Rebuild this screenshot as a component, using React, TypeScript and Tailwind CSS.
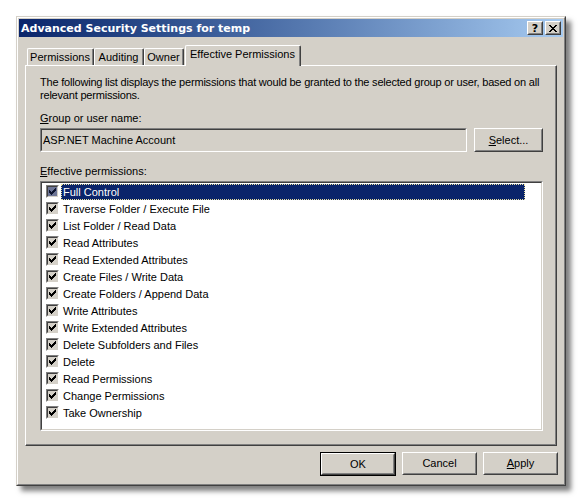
import React from "react";

const FONT = '"Liberation Sans", Arial, sans-serif';

const perms = [
  "Full Control",
  "Traverse Folder / Execute File",
  "List Folder / Read Data",
  "Read Attributes",
  "Read Extended Attributes",
  "Create Files / Write Data",
  "Create Folders / Append Data",
  "Write Attributes",
  "Write Extended Attributes",
  "Delete Subfolders and Files",
  "Delete",
  "Read Permissions",
  "Change Permissions",
  "Take Ownership",
];

function Check({ selected }: { selected: boolean }) {
  const cols: [number, number][] = [
    [1, 2],
    [2, 3],
    [3, 4],
    [4, 3],
    [5, 2],
    [6, 1],
    [7, 0],
  ];
  return (
    <div className="w-[13px] h-[13px] border border-t-[#808080] border-l-[#808080] border-b-white border-r-white shrink-0">
      <div
        className={`w-[11px] h-[11px] border border-t-[#404040] border-l-[#404040] border-b-[#d4d0c8] border-r-[#d4d0c8] ${
          selected ? "bg-[#6d7596]" : "bg-[#d4d0c8]"
        }`}
      >
        <svg width="9" height="9" viewBox="0 0 9 9" shapeRendering="crispEdges" className="block">
          {cols.map(([x, y], i) => (
            <rect key={i} x={x} y={y + 1} width="1" height="3" fill={selected ? "#0e1530" : "#000"} />
          ))}
        </svg>
      </div>
    </div>
  );
}

function Raised({
  children,
  className = "",
}: {
  children: React.ReactNode;
  className?: string;
}) {
  return (
    <div
      className={`border border-t-white border-l-white border-b-[#404040] border-r-[#404040] bg-[#d4d0c8] ${className}`}
    >
      <div className="w-full h-full border border-t-[#d4d0c8] border-l-[#d4d0c8] border-b-[#808080] border-r-[#808080] flex items-center justify-center">
        {children}
      </div>
    </div>
  );
}

function Sunken({
  children,
  className = "",
  inner = "",
}: {
  children: React.ReactNode;
  className?: string;
  inner?: string;
}) {
  return (
    <div
      className={`border border-t-[#808080] border-l-[#808080] border-b-white border-r-white ${className}`}
    >
      <div
        className={`w-full h-full border border-t-[#404040] border-l-[#404040] border-b-[#d4d0c8] border-r-[#d4d0c8] ${inner}`}
      >
        {children}
      </div>
    </div>
  );
}

export default function App() {
  return (
    <div
      className="min-h-[502px] w-[584px] bg-white pt-[16px] pl-[16px] text-[11px] leading-[13px] text-black"
      style={{ fontFamily: FONT }}
    >
      {/* window */}
      <div className="w-[550px] h-[470px] shadow-[5px_5px_5px_rgba(0,0,0,0.5)] border border-t-[#d4d0c8] border-l-[#d4d0c8] border-b-[#404040] border-r-[#404040] bg-[#d4d0c8]">
        <div className="w-full h-full border border-t-white border-l-white border-b-[#808080] border-r-[#808080] p-[1px] flex flex-col">
          {/* title bar */}
          <div className="h-[18px] flex items-center bg-gradient-to-r from-[#0a246a] to-[#a6caf0] pl-[2px] pr-[2px] shrink-0">
            <span
              className="text-white font-bold text-[11px] tracking-[0px] flex-1"
              style={{ fontFamily: '"DejaVu Sans", Verdana, sans-serif' }}
            >
              Advanced Security Settings for temp
            </span>
            <Raised className="w-[16px] h-[14px]">
              <span
                className="font-bold text-[11px] leading-[11px] text-black"
                style={{ fontFamily: '"DejaVu Sans", sans-serif' }}
              >
                ?
              </span>
            </Raised>
            <Raised className="w-[16px] h-[14px] ml-[2px]">
              <svg width="8" height="7" viewBox="0 0 8 7" shapeRendering="crispEdges">
                <path d="M0 0h2v1h-2zM6 0h2v1h-2zM1 1h2v1h-2zM5 1h2v1h-2zM2 2h4v1h-4zM3 3h2v1h-2zM2 4h4v1h-4zM1 5h2v1h-2zM5 5h2v1h-2zM0 6h2v1h-2zM6 6h2v1h-2z" fill="#000" />
              </svg>
            </Raised>
          </div>

          {/* tabs */}
          <div className="mt-[8px] h-[20px] flex items-end pl-[8px] shrink-0">
            {[
              ["Permissions", "w-[67px]"],
              ["Auditing", "w-[50px]"],
              ["Owner", "w-[40px]"],
            ].map(([t, w]) => (
              <div
                key={t}
                className={`${w} h-[17px] border-t border-l border-t-white border-l-white border-r border-r-[#404040] rounded-tl-[2px] rounded-tr-[2px]`}
              >
                <div className="h-full border-r border-r-[#808080] flex items-center justify-center pt-[1px]">
                  {t}
                </div>
              </div>
            ))}
            <div className="ml-[1px] w-[116px] h-[21px] mb-[-1px] relative z-10 bg-[#d4d0c8] border-t border-l border-t-white border-l-white border-r border-r-[#404040] rounded-tl-[2px] rounded-tr-[2px]">
              <div className="h-full border-r border-r-[#808080] flex items-start justify-center pt-[2px]">
                Effective Permissions
              </div>
            </div>
          </div>

          {/* panel */}
          <div className="mx-[6px] h-[381px] border border-t-white border-l-white border-b-[#404040] border-r-[#404040] shrink-0">
            <div className="w-full h-full border-b border-r border-b-[#808080] border-r-[#808080] pl-[14px] pr-[12px] pt-[10px] flex flex-col">
              <p className="leading-[13px] tracking-[-0.2px]">
                The following list displays the permissions that would be granted to the selected group or user, based on all relevant permissions.
              </p>
              <div className="mt-[10px] leading-[13px]">
                <span className="underline">G</span>roup or user name:
              </div>
              <div className="mt-[3px] flex items-start">
                <Sunken className="w-[428px] h-[24px]" inner="bg-[#d4d0c8] flex items-center pl-[1px]">
                  ASP.NET Machine Account
                </Sunken>
                <div className="ml-[7px]">
                  <Raised className="w-[69px] h-[24px]">
                    <span>
                      <span className="underline">S</span>elect...
                    </span>
                  </Raised>
                </div>
              </div>
              <div className="mt-[13px] leading-[13px]">
                <span className="underline">E</span>ffective permissions:
              </div>
              <Sunken className="mt-[3px] w-[503px] h-[250px]" inner="bg-white pt-[1px] pl-[4px]">
                {perms.map((p, i) => (
                  <div key={p} className="h-[17px] flex items-start">
                    <div className="mt-[1px]">
                      <Check selected={i === 0} />
                    </div>
                    <div
                      className={`ml-[2px] h-[16px] w-[464px] flex items-center pl-[2px] ${
                        i === 0
                          ? "bg-[#0a246a] text-white outline outline-1 outline-dotted outline-[#e8e0a0] outline-offset-[-1px]"
                          : ""
                      }`}
                    >
                      {p}
                    </div>
                  </div>
                ))}
              </Sunken>
            </div>
          </div>

          {/* buttons */}
          <div className="mt-[6px] flex justify-end gap-[6px] pr-[5px] shrink-0">
            <div className="border border-black">
              <Raised className="w-[74px] h-[22px]">OK</Raised>
            </div>
            <Raised className="w-[75px] h-[23px]">Cancel</Raised>
            <Raised className="w-[75px] h-[23px]">
              <span>
                <span className="underline">A</span>pply
              </span>
            </Raised>
          </div>
        </div>
      </div>
    </div>
  );
}
